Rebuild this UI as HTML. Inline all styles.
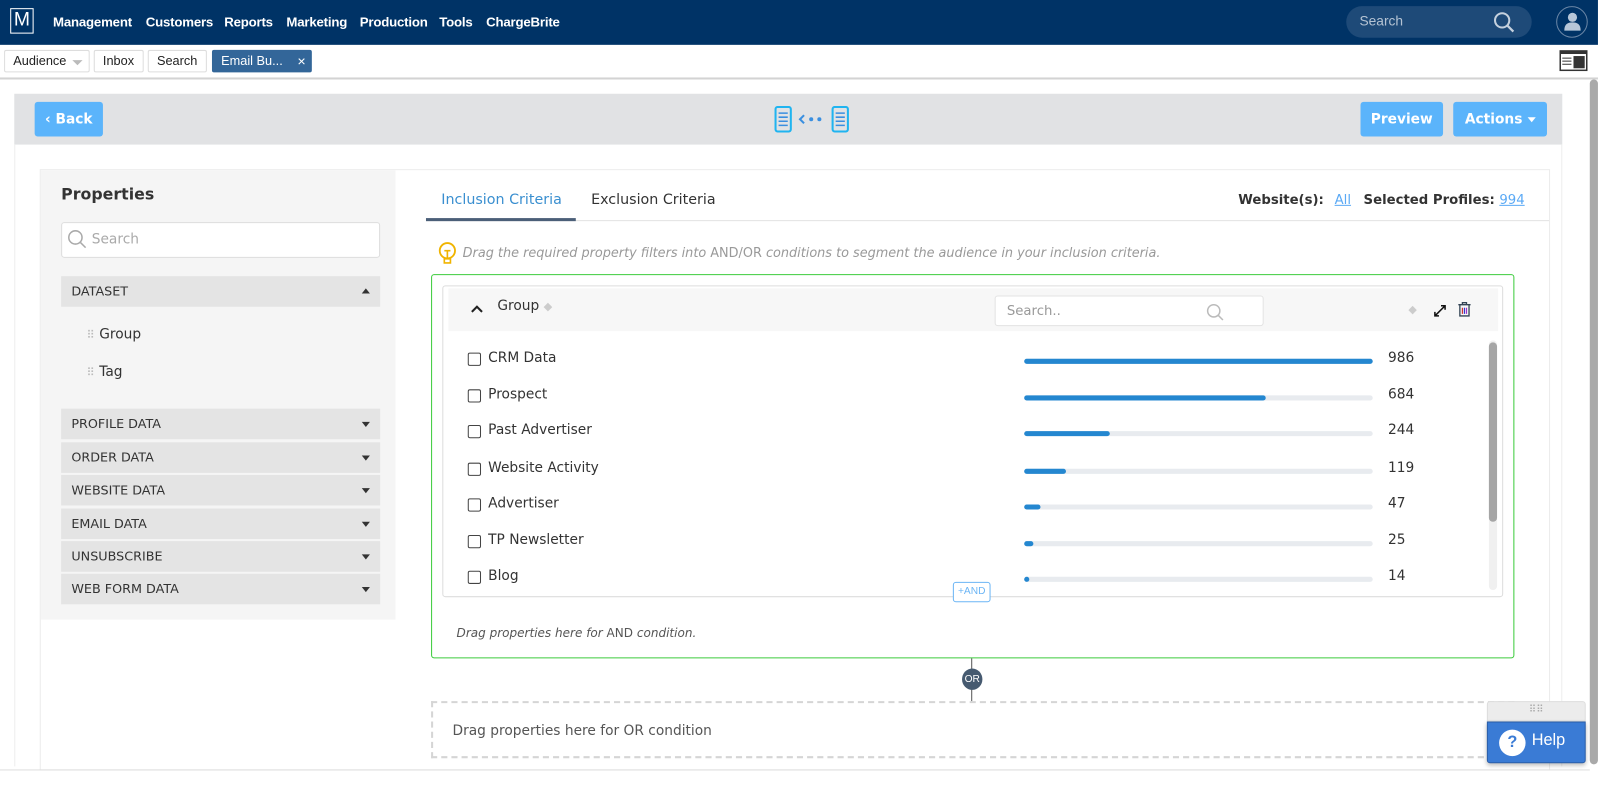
<!DOCTYPE html>
<html><head><meta charset="utf-8"><style>
*{box-sizing:border-box;margin:0;padding:0}
body{width:1598px;height:787px;overflow:hidden;background:#fff;font-family:"Liberation Sans",Arial,sans-serif;position:relative;color:#333}
#w{position:absolute;left:0;top:0;width:1568px;height:772px;transform:scale(1.0191);transform-origin:0 0}
.a{position:absolute}
.d{font-family:"DejaVu Sans",sans-serif}
.nav{left:0;top:0;width:1568px;height:44px;background:#003366}
.nav span{position:absolute;top:14px;color:#fff;font-size:13px;font-weight:bold;letter-spacing:-0.2px}
.tab{position:absolute;top:49px;height:22px;border:1px solid #ddd;border-radius:2px;font-size:12.5px;line-height:20px;padding:0 8px;color:#222;background:#fff}
.side{left:40px;top:167px;width:348px;height:441px;background:#f5f5f5}
.sec{position:absolute;left:60px;width:313px;height:30px;background:#e4e4e4;font-size:12.5px;line-height:30px;padding-left:10px;color:#333;font-family:"DejaVu Sans",sans-serif}
.sec i{position:absolute;right:10px;top:13px;border-left:4.5px solid transparent;border-right:4.5px solid transparent;border-top:5px solid #333}
.row{position:absolute;left:459px;height:20px;font-size:13.5px;color:#333;width:1000px;font-family:"DejaVu Sans",sans-serif}
.row b{position:absolute;left:0;top:4px;width:13px;height:13px;border:1px solid #444;border-radius:2px;background:#fff}
.row span{position:absolute;left:20px;top:1px}
.row .tr{position:absolute;left:546px;top:10px;width:342px;height:5px;background:#e8ebef;border-radius:3px}
.row .fl{position:absolute;left:0;top:0;height:5px;background:#2487d0;border-radius:3px}
.row em{position:absolute;left:903px;top:1px;font-style:normal}
.btn{position:absolute;background:#5bb4fb;color:#fff;font-weight:bold;font-size:14.5px;border-radius:3px;text-align:center;line-height:34px;height:34px;font-family:"DejaVu Sans",sans-serif;font-size:13.5px}
</style></head><body><div id="w">
<div class="a nav">
<div class="a" style="left:10px;top:8px;width:23px;height:25px;border:1.5px solid #fff;color:#fff;font-size:19px;text-align:center;line-height:22px">M</div>
<span style="left:52px">Management</span><span style="left:143px">Customers</span><span style="left:220px">Reports</span><span style="left:281px">Marketing</span><span style="left:353px">Production</span><span style="left:431px">Tools</span><span style="left:477px">ChargeBrite</span>
<div class="a" style="left:1321px;top:6px;width:182px;height:31px;border-radius:16px;background:#1e4a78"></div>
<div class="a" style="left:1334px;top:13px;color:#b5c3d3;font-size:13.5px">Search</div>
<svg class="a" style="left:1464px;top:10px" width="24" height="24" viewBox="0 0 24 24"><circle cx="10" cy="10" r="7" fill="none" stroke="#c5d1de" stroke-width="2"/><line x1="15" y1="15" x2="21" y2="21" stroke="#c5d1de" stroke-width="2.2"/></svg>
<div class="a" style="left:1527px;top:6px;width:31px;height:31px;border-radius:50%;border:1px solid #6a86a6"></div>
<svg class="a" style="left:1533px;top:11px" width="20" height="20" viewBox="0 0 20 20"><circle cx="10" cy="6" r="4.5" fill="#b7c7d9"/><path d="M2 19c0-6 3-8 8-8s8 2 8 8z" fill="#b7c7d9"/></svg>
</div>
<div class="tab" style="left:4px;width:84px">Audience <span style="position:absolute;right:6px;top:9px;border-left:5px solid transparent;border-right:5px solid transparent;border-top:5px solid #bbb"></span></div>
<div class="tab" style="left:92px">Inbox</div>
<div class="tab" style="left:145px">Search</div>
<div class="tab" style="left:208px;width:98px;background:#336699;border-color:#336699;color:#fff">Email Bu... <span style="position:absolute;right:5px;top:0;font-size:14px">×</span></div>
<svg class="a" style="left:1530px;top:49px" width="28" height="21" viewBox="0 0 28 21"><rect x="1" y="1" width="26" height="19" fill="#fff" stroke="#333" stroke-width="1.5"/><rect x="1" y="1" width="26" height="3" fill="#333"/><rect x="14" y="6" width="11" height="12" fill="#333"/><path d="M3 8h9M3 11h9M3 14h9" stroke="#333"/></svg>
<div class="a" style="left:0;top:76px;width:1568px;height:2px;background:#d3d3d3"></div>
<div class="a" style="left:1560px;top:78px;width:8px;height:672px;background:#a9a9a9;border-radius:4px"></div>
<div class="a" style="left:14px;top:92px;width:1519px;height:50px;background:#e1e2e4"></div>
<div class="btn" style="left:34px;top:100px;width:67px">‹ Back</div>
<div class="btn" style="left:1335px;top:100px;width:81px">Preview</div>
<div class="btn" style="left:1426px;top:100px;width:92px">Actions <span style="display:inline-block;border-left:4.5px solid transparent;border-right:4.5px solid transparent;border-top:5px solid #fff;vertical-align:middle"></span></div>
<svg class="a" style="left:758px;top:104px" width="80" height="27" viewBox="0 0 80 27"><rect x="3" y="1" width="15" height="24" rx="2" fill="none" stroke="#20b4f0" stroke-width="2"/><path d="M6 7h9M6 11h9M6 15h9M6 19h9" stroke="#3a8fe0" stroke-width="1.5"/><path d="M31 9l-4 4 4 4" fill="none" stroke="#3a8fe0" stroke-width="2"/><circle cx="38" cy="13" r="2" fill="#3a8fe0"/><circle cx="46" cy="13" r="2" fill="#3a8fe0"/><rect x="59" y="1" width="15" height="24" rx="2" fill="none" stroke="#20b4f0" stroke-width="2"/><path d="M62 7h9M62 11h9M62 15h9M62 19h9" stroke="#3a8fe0" stroke-width="1.5"/></svg>
<div class="a" style="left:14px;top:142px;width:1519px;height:610px;background:#fff;border-left:1px solid #eee;border-right:1px solid #eee"></div>
<div class="a" style="left:39px;top:166px;width:1482px;height:590px;border:1px solid #ececec"></div>
<div class="a side"></div>
<div class="a d" style="left:60px;top:182px;font-size:15.5px;font-weight:bold;color:#333">Properties</div>
<div class="a" style="left:60px;top:218px;width:313px;height:35px;background:#fff;border:1px solid #ddd;border-radius:3px"></div>
<svg class="a" style="left:66px;top:225px" width="20" height="20" viewBox="0 0 20 20"><circle cx="8" cy="8" r="6.5" fill="none" stroke="#aaa" stroke-width="1.5"/><line x1="13" y1="13" x2="18" y2="18" stroke="#aaa" stroke-width="1.5"/></svg>
<div class="a d" style="left:90px;top:227px;color:#aaa;font-size:13.5px">Search</div>
<div class="sec" style="top:271px">DATASET<i style="border-top:none;border-bottom:5px solid #333;top:12px"></i></div>
<div class="a d" style="left:85px;top:320px;font-size:13.5px;color:#333"><span style="color:#bbb;font-size:11px">⠿</span> Group</div>
<div class="a d" style="left:85px;top:357px;font-size:13.5px;color:#333"><span style="color:#bbb;font-size:11px">⠿</span> Tag</div>
<div class="sec" style="top:401px">PROFILE DATA<i></i></div>
<div class="sec" style="top:434px">ORDER DATA<i></i></div>
<div class="sec" style="top:466px">WEBSITE DATA<i></i></div>
<div class="sec" style="top:499px">EMAIL DATA<i></i></div>
<div class="sec" style="top:531px">UNSUBSCRIBE<i></i></div>
<div class="sec" style="top:563px">WEB FORM DATA<i></i></div>
<div class="a" style="left:418px;top:216px;width:1102px;height:1px;background:#e2e2e2"></div>
<div class="a d" style="left:433px;top:188px;font-size:14px;color:#3a8fd0">Inclusion Criteria</div>
<div class="a" style="left:418px;top:214px;width:147px;height:3px;background:#4b5f78"></div>
<div class="a d" style="left:580px;top:188px;font-size:14px;color:#333">Exclusion Criteria</div>
<div class="a d" style="left:1215px;top:189px;font-size:13px;font-weight:bold;color:#333">Website(s): <span style="color:#5aa9f5;font-weight:normal;text-decoration:underline;margin-left:6px">All</span></div>
<div class="a d" style="left:1338px;top:189px;font-size:13px;font-weight:bold;color:#333">Selected Profiles: <span style="color:#5aa9f5;font-weight:normal;text-decoration:underline">994</span></div>
<svg class="a" style="left:430px;top:237px" width="18" height="24" viewBox="0 0 18 24"><circle cx="9" cy="9" r="7.5" fill="none" stroke="#f0b400" stroke-width="1.8"/><path d="M6 9h6M9 9v7M6 17h6v4H6z" fill="none" stroke="#f0b400" stroke-width="1.6"/></svg>
<div class="a d" style="left:454px;top:240px;font-size:12.6px;font-style:italic;color:#999;white-space:nowrap">Drag the required property filters into <span style="font-style:normal">AND/OR</span> conditions to segment the audience in your inclusion criteria.</div>
<div class="a" style="left:423px;top:269px;width:1063px;height:377px;border:1px solid #3ccb3c;border-radius:3px"></div>
<div class="a" style="left:434px;top:280px;width:1041px;height:306px;border:1px solid #ddd;border-radius:3px"></div>
<div class="a" style="left:440px;top:283px;width:1030px;height:42px;background:#f7f7f7"></div>
<svg class="a" style="left:462px;top:299px" width="12" height="8" viewBox="0 0 12 8"><path d="M1 7l5-5 5 5" fill="none" stroke="#222" stroke-width="2"/></svg>
<div class="a d" style="left:488px;top:292px;font-size:13.5px;color:#333">Group <span style="color:#ccc;font-size:11px">◆</span></div>
<div class="a" style="left:976px;top:290px;width:264px;height:30px;background:#fff;border:1px solid #e3e3e3;border-radius:3px"></div>
<div class="a d" style="left:988px;top:298px;font-size:13px;color:#999">Search..</div>
<svg class="a" style="left:1183px;top:297px" width="20" height="20" viewBox="0 0 20 20"><circle cx="8" cy="8" r="6" fill="none" stroke="#bbb" stroke-width="1.5"/><line x1="12.5" y1="12.5" x2="17" y2="17" stroke="#bbb" stroke-width="1.5"/></svg>
<div class="a" style="left:1382px;top:297px;color:#ccc;font-size:11px">◆</div>
<svg class="a" style="left:1406px;top:298px" width="14" height="14" viewBox="0 0 14 14"><path d="M2 12L12 2M8 2h4v4M2 8v4h4" fill="none" stroke="#111" stroke-width="1.5"/></svg>
<svg class="a" style="left:1430px;top:296px" width="14" height="15" viewBox="0 0 14 15"><path d="M1 3h12M5 3V1h4v2M2.5 3.5v10.5h9V3.5" fill="none" stroke="#345" stroke-width="1.3"/><path d="M5 6v6" stroke="#c33" stroke-width="1.2"/><path d="M7 6v6" stroke="#33c" stroke-width="1.2"/><path d="M9 6v6" stroke="#93c" stroke-width="1.2"/></svg>
<div class="a" style="left:1461px;top:334px;width:8px;height:245px;border-radius:4px;background:#f0f0f0"></div>
<div class="a" style="left:1461px;top:336px;width:8px;height:176px;border-radius:4px;background:#a5a5a5"></div>
<div class="row" style="top:342px"><b></b><span>CRM Data</span><div class="tr"><div class="fl" style="width:342px"></div></div><em>986</em></div>
<div class="row" style="top:378px"><b></b><span>Prospect</span><div class="tr"><div class="fl" style="width:237px"></div></div><em>684</em></div>
<div class="row" style="top:413px"><b></b><span>Past Advertiser</span><div class="tr"><div class="fl" style="width:84px"></div></div><em>244</em></div>
<div class="row" style="top:450px"><b></b><span>Website Activity</span><div class="tr"><div class="fl" style="width:41px"></div></div><em>119</em></div>
<div class="row" style="top:485px"><b></b><span>Advertiser</span><div class="tr"><div class="fl" style="width:16px"></div></div><em>47</em></div>
<div class="row" style="top:521px"><b></b><span>TP Newsletter</span><div class="tr"><div class="fl" style="width:9px"></div></div><em>25</em></div>
<div class="row" style="top:556px"><b></b><span>Blog</span><div class="tr"><div class="fl" style="width:5px"></div></div><em>14</em></div>
<div class="a" style="left:935px;top:571px;width:37px;height:20px;background:#fff;border:1px solid #6bb5f5;border-radius:3px;color:#6bb5f5;font-size:10px;text-align:center;line-height:18px">+AND</div>
<div class="a d" style="left:448px;top:614px;font-size:11.8px;font-style:italic;color:#555">Drag properties here for <span style="font-style:normal">AND</span> condition.</div>
<div class="a" style="left:953px;top:646px;width:1px;height:42px;background:#555"></div>
<div class="a" style="left:944px;top:656px;width:20px;height:21px;border-radius:50%;background:#465a70;color:#fff;font-size:10px;text-align:center;line-height:21px">OR</div>
<div class="a" style="left:423px;top:688px;width:1063px;height:56px;border:2px dashed #d5d5d5"></div>
<div class="a d" style="left:444px;top:709px;font-size:13.5px;color:#555">Drag properties here for OR condition</div>
<div class="a" style="left:1459px;top:688px;width:97px;height:20px;background:#ececec;border:1px solid #ddd;border-radius:3px 3px 0 0;color:#aaa;font-size:10px;text-align:center;line-height:16px">⠿⠿</div>
<div class="a" style="left:1459px;top:708px;width:97px;height:41px;background:#3a7bd5;border:1px solid #2b5ea8;border-radius:0 0 3px 3px;box-shadow:0 2px 4px rgba(0,0,0,.25)"></div>
<div class="a" style="left:1471px;top:716px;width:26px;height:26px;border-radius:50%;background:#fff;color:#3a7bd5;font-weight:bold;font-size:16px;text-align:center;line-height:26px">?</div>
<div class="a" style="left:1503px;top:718px;color:#fff;font-size:16px">Help</div>
<div class="a" style="left:0;top:755px;width:1560px;height:1px;background:#ddd"></div>
</div></body></html>
